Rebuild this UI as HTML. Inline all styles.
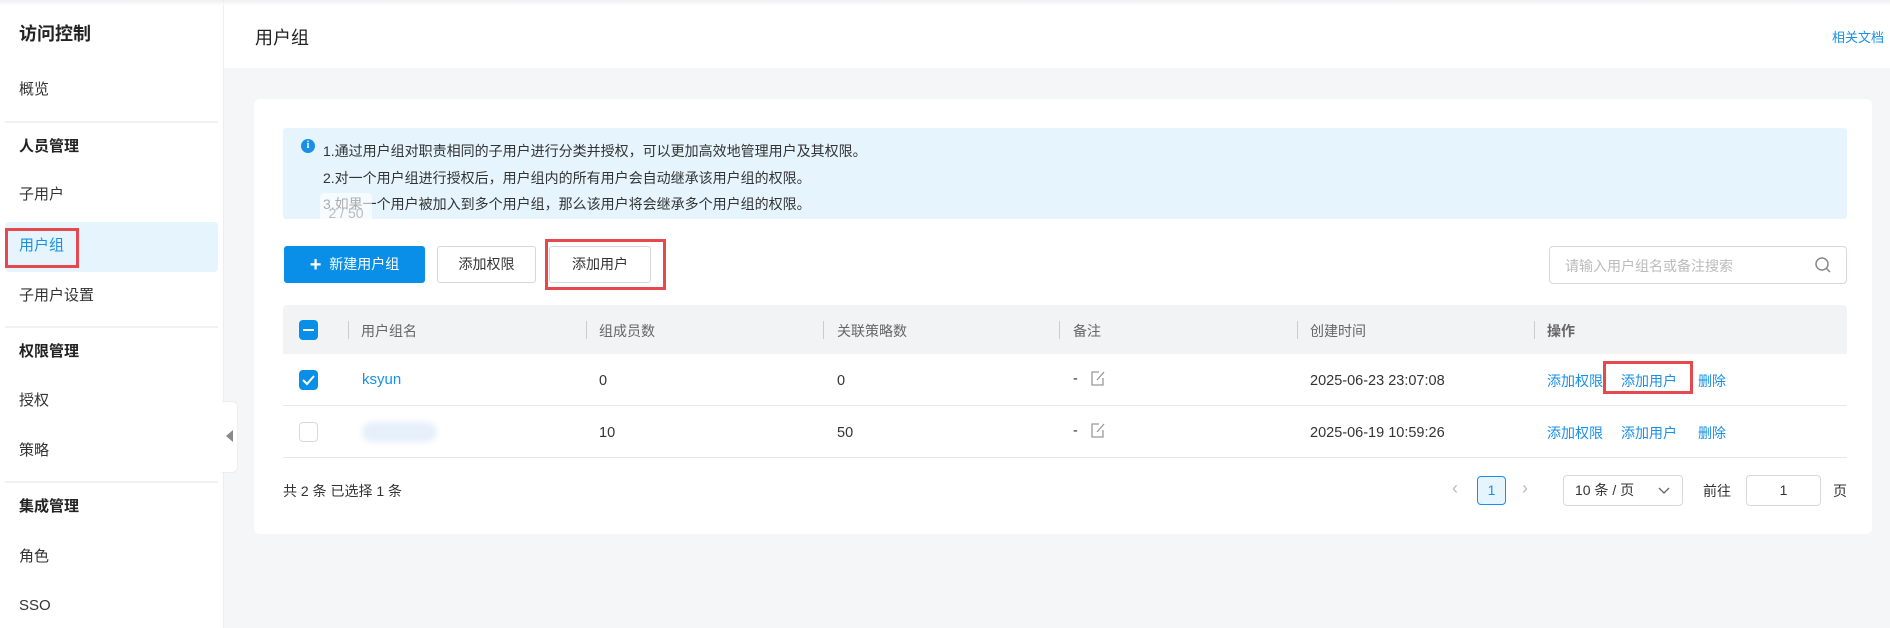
<!DOCTYPE html>
<html><head><meta charset="utf-8"><style>
*{box-sizing:border-box;margin:0;padding:0}
body{width:1890px;height:628px;overflow:hidden;background:#f5f6f8;font-family:"Liberation Sans","Noto Sans CJK SC",sans-serif;color:#333;position:relative}
.a{position:absolute;white-space:nowrap}
.side{position:absolute;left:0;top:0;width:224px;height:628px;background:#fff;border-right:1px solid #eceef2}
.mi{position:absolute;left:19px;font-size:15px;color:#333;line-height:20px}
.hd{font-weight:bold;color:#222}
.dv{position:absolute;left:5px;width:213px;height:2px;background:#f0f1f3}
.top{position:absolute;left:224px;top:0;width:1666px;height:68px;background:#fff}
.card{position:absolute;left:254px;top:99px;width:1618px;height:435px;background:#fff;border-radius:6px}
.btn{position:absolute;top:246px;height:37px;border:1px solid #d5d8de;border-radius:3px;background:#fff;font-size:14px;color:#333;text-align:center;line-height:35px}
.th{position:absolute;font-size:14px;color:#666;top:321px;line-height:20px}
.sep{position:absolute;top:321px;width:1px;height:18px;background:#ccc}
.td{position:absolute;font-size:14.5px;color:#333;line-height:20px}
.lk{position:absolute;font-size:14px;color:#1890e8;line-height:20px}
.red{position:absolute;border:3px solid #e5484d}
</style></head><body>
<div style="position:absolute;left:0;top:0;width:1890px;height:6px;background:linear-gradient(#e8e9ec,#fff);z-index:5;opacity:.7"></div>
<div class="side">
<div class="mi hd" style="top:24px;font-size:18px">访问控制</div>
<div class="mi" style="top:80px">概览</div>
<div class="dv" style="top:121px"></div>
<div class="mi hd" style="top:137px">人员管理</div>
<div class="mi" style="top:185px">子用户</div>
<div style="position:absolute;left:5px;top:222px;width:213px;height:50px;background:#e6f4fd;border-radius:4px"></div>
<div class="mi" style="top:236px;color:#1890e8">用户组</div>
<div class="red" style="left:5px;top:228px;width:74px;height:40px"></div>
<div class="mi" style="top:286px">子用户设置</div>
<div class="dv" style="top:326px"></div>
<div class="mi hd" style="top:342px">权限管理</div>
<div class="mi" style="top:391px">授权</div>
<div class="mi" style="top:441px">策略</div>
<div class="dv" style="top:481px"></div>
<div class="mi hd" style="top:497px">集成管理</div>
<div class="mi" style="top:547px">角色</div>
<div class="mi" style="top:596px">SSO</div>
</div>
<div style="position:absolute;left:222px;top:401px;width:16px;height:72px;background:#fff;border-radius:0 6px 6px 0;border:1px solid #eee;border-left:none"></div>
<div class="a" style="left:226px;top:430px;width:0;height:0;border-top:6px solid transparent;border-bottom:6px solid transparent;border-right:7px solid #888"></div>
<div class="top">
<div class="a" style="left:31px;top:24px;font-size:18px;color:#222">用户组</div>
<div class="a" style="right:6px;top:27px;font-size:13px;color:#1890e8">相关文档</div>
</div>
<div class="card"></div>
<div style="position:absolute;left:283px;top:128px;width:1564px;height:91px;background:#e5f4fd;border-radius:3px"></div>
<div class="a" style="left:301px;top:139px;width:14px;height:14px;border-radius:50%;background:#1890e8;color:#fff;font-size:10px;font-weight:bold;text-align:center;line-height:14px;font-family:'Liberation Serif',serif">i</div>
<div class="a" style="left:323px;top:138px;font-size:14px;line-height:26.5px;color:#333">1.通过用户组对职责相同的子用户进行分类并授权，可以更加高效地管理用户及其权限。<br>2.对一个用户组进行授权后，用户组内的所有用户会自动继承该用户组的权限。<br>3.如果一个用户被加入到多个用户组，那么该用户将会继承多个用户组的权限。</div>
<div class="a" style="left:320px;top:193px;width:52px;height:46px;background:rgba(255,255,255,.6);border-radius:4px;font-size:14px;color:#bbb;text-align:center;line-height:40px">2 / 50</div>
<div class="btn" style="left:284px;width:141px;background:#0a8fe8;border-color:#0a8fe8;color:#fff"><span style="font-size:20px;font-weight:bold;vertical-align:-2px">+</span>&nbsp; 新建用户组</div>
<div class="btn" style="left:437px;width:99px">添加权限</div>
<div class="btn" style="left:549px;width:102px">添加用户</div>
<div class="red" style="left:545px;top:239px;width:121px;height:51px"></div>
<div style="position:absolute;left:1549px;top:246px;width:298px;height:38px;border:1px solid #d5d8de;border-radius:4px"></div>
<div class="a" style="left:1565px;top:256px;font-size:14px;color:#bbb">请输入用户组名或备注搜索</div>
<svg class="a" style="left:1814px;top:256px" width="18" height="18" viewBox="0 0 18 18"><circle cx="8" cy="8" r="6" fill="none" stroke="#888" stroke-width="1.5"/><path d="M12.5 12.5L16 16" stroke="#888" stroke-width="1.5"/></svg>
<div style="position:absolute;left:283px;top:305px;width:1564px;height:49px;background:#f2f3f5;border-radius:4px 4px 0 0"></div>
<div class="a" style="left:299px;top:320px;width:19px;height:20px;background:#0a8fe8;border-radius:4px"><div style="position:absolute;left:4px;top:9px;width:11px;height:2px;background:#fff"></div></div>
<div class="sep" style="left:348px"></div><div class="th" style="left:361px">用户组名</div>
<div class="sep" style="left:586px"></div><div class="th" style="left:599px">组成员数</div>
<div class="sep" style="left:823px"></div><div class="th" style="left:837px">关联策略数</div>
<div class="sep" style="left:1059px"></div><div class="th" style="left:1073px">备注</div>
<div class="sep" style="left:1297px"></div><div class="th" style="left:1310px">创建时间</div>
<div class="sep" style="left:1534px"></div><div class="th" style="left:1547px;font-weight:bold">操作</div>
<div style="position:absolute;left:283px;top:405px;width:1564px;height:1px;background:#e6e8eb"></div>
<div style="position:absolute;left:283px;top:457px;width:1564px;height:1px;background:#e6e8eb"></div>
<div class="a" style="left:299px;top:370px;width:19px;height:20px;background:#0a8fe8;border-radius:4px"><svg width="19" height="20"><path d="M4 10l4 4 7-8" stroke="#fff" stroke-width="2" fill="none"/></svg></div>
<div class="lk" style="left:362px;top:370px;font-size:15px">ksyun</div>
<div class="td" style="left:599px;top:371px">0</div>
<div class="td" style="left:837px;top:371px">0</div>
<div class="td" style="left:1073px;top:369px">-</div>
<svg class="a" style="left:1090px;top:370px" width="16" height="17"><path d="M9 2H2v13h11V8M7 10l7-8" stroke="#999" stroke-width="1.3" fill="none"/></svg>
<div class="td" style="left:1310px;top:371px">2025-06-23 23:07:08</div>
<div class="lk" style="left:1547px;top:371px">添加权限</div>
<div class="lk" style="left:1621px;top:371px">添加用户</div>
<div class="lk" style="left:1698px;top:371px">删除</div>
<div class="red" style="left:1603px;top:361px;width:90px;height:33px"></div>
<div class="a" style="left:299px;top:422px;width:19px;height:20px;border:1px solid #d5d8de;border-radius:4px"></div>
<div class="a" style="left:362px;top:422px;width:75px;height:20px;background:#e6f0fa;border-radius:10px;filter:blur(3px)"></div>
<div class="td" style="left:599px;top:423px">10</div>
<div class="td" style="left:837px;top:423px">50</div>
<div class="td" style="left:1073px;top:421px">-</div>
<svg class="a" style="left:1090px;top:422px" width="16" height="17"><path d="M9 2H2v13h11V8M7 10l7-8" stroke="#999" stroke-width="1.3" fill="none"/></svg>
<div class="td" style="left:1310px;top:423px">2025-06-19 10:59:26</div>
<div class="lk" style="left:1547px;top:423px">添加权限</div>
<div class="lk" style="left:1621px;top:423px">添加用户</div>
<div class="lk" style="left:1698px;top:423px">删除</div>
<div class="a" style="left:283px;top:481px;font-size:14px;color:#333">共 2 条 已选择 1 条</div>
<div class="a" style="left:1452px;top:478px;font-size:18px;color:#bbb">‹</div>
<div class="a" style="left:1477px;top:476px;width:29px;height:29px;border:1px solid #1890e8;border-radius:4px;background:#e6f4fd;color:#1890e8;font-size:14px;text-align:center;line-height:27px">1</div>
<div class="a" style="left:1522px;top:478px;font-size:18px;color:#bbb">›</div>
<div class="a" style="left:1563px;top:475px;width:120px;height:31px;border:1px solid #d5d8de;border-radius:4px;font-size:14px;line-height:29px;padding-left:11px">10 条 / 页<svg style="position:absolute;right:12px;top:11px" width="12" height="8"><path d="M1 1l5 5 5-5" stroke="#666" stroke-width="1.3" fill="none"/></svg></div>
<div class="a" style="left:1703px;top:481px;font-size:14px">前往</div>
<div class="a" style="left:1746px;top:475px;width:75px;height:31px;border:1px solid #d5d8de;border-radius:4px;font-size:14px;text-align:center;line-height:29px">1</div>
<div class="a" style="left:1833px;top:481px;font-size:14px">页</div>
</body></html>
